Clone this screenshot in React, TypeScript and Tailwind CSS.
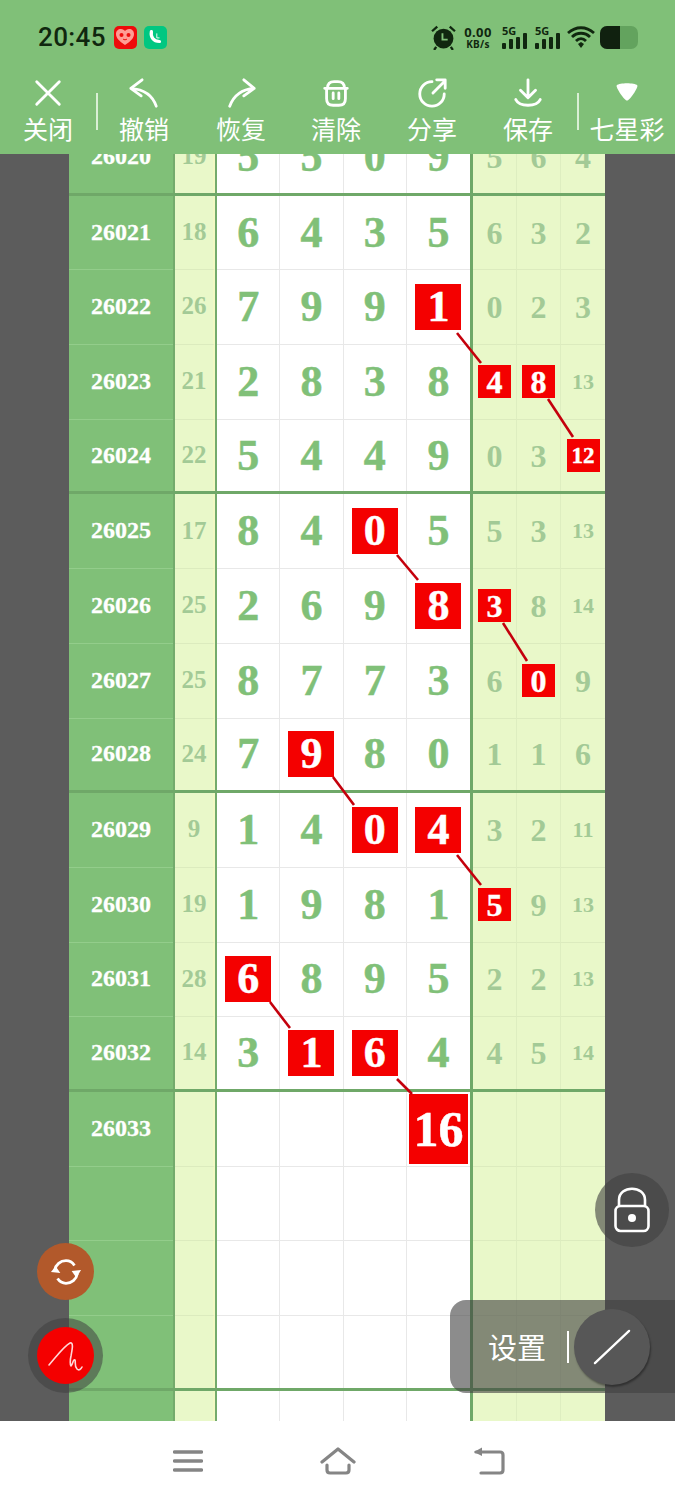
import React from "react";

const GREEN = "bg-[#80c078]";

type Row = {
  id: string;
  sum: string;
  main: string[];
  tail: string[];
  hitMain?: number[];
  hitTail?: number[];
  groupEnd?: boolean;
};

const rows: Row[] = [
  { id: "26020", sum: "19", main: ["5", "5", "0", "9"], tail: ["5", "6", "4"], groupEnd: true },
  { id: "26021", sum: "18", main: ["6", "4", "3", "5"], tail: ["6", "3", "2"] },
  { id: "26022", sum: "26", main: ["7", "9", "9", "1"], tail: ["0", "2", "3"], hitMain: [3] },
  { id: "26023", sum: "21", main: ["2", "8", "3", "8"], tail: ["4", "8", "13"], hitTail: [0, 1] },
  { id: "26024", sum: "22", main: ["5", "4", "4", "9"], tail: ["0", "3", "12"], hitTail: [2], groupEnd: true },
  { id: "26025", sum: "17", main: ["8", "4", "0", "5"], tail: ["5", "3", "13"], hitMain: [2] },
  { id: "26026", sum: "25", main: ["2", "6", "9", "8"], tail: ["3", "8", "14"], hitMain: [3], hitTail: [0] },
  { id: "26027", sum: "25", main: ["8", "7", "7", "3"], tail: ["6", "0", "9"], hitTail: [1] },
  { id: "26028", sum: "24", main: ["7", "9", "8", "0"], tail: ["1", "1", "6"], hitMain: [1], groupEnd: true },
  { id: "26029", sum: "9", main: ["1", "4", "0", "4"], tail: ["3", "2", "11"], hitMain: [2, 3] },
  { id: "26030", sum: "19", main: ["1", "9", "8", "1"], tail: ["5", "9", "13"], hitTail: [0] },
  { id: "26031", sum: "28", main: ["6", "8", "9", "5"], tail: ["2", "2", "13"], hitMain: [0] },
  { id: "26032", sum: "14", main: ["3", "1", "6", "4"], tail: ["4", "5", "14"], hitMain: [1, 2], groupEnd: true },
  { id: "26033", sum: "", main: ["", "", "", "16"], tail: ["", "", ""], hitMain: [3] },
  { id: "", sum: "", main: ["", "", "", ""], tail: ["", "", ""] },
  { id: "", sum: "", main: ["", "", "", ""], tail: ["", "", ""] },
  { id: "", sum: "", main: ["", "", "", ""], tail: ["", "", ""], groupEnd: true },
  { id: "", sum: "", main: ["", "", "", ""], tail: ["", "", ""] },
];

const links = [
  [457, 333, 481, 363],
  [548, 399, 573, 437],
  [397, 555, 418, 580],
  [503, 623, 527, 661],
  [333, 777, 354, 805],
  [457, 855, 481, 885],
  [270, 1002, 290, 1028],
  [397, 1079, 412, 1094],
];

const stroke = {
  fill: "none",
  stroke: "currentColor",
  strokeWidth: 3,
  strokeLinecap: "round" as const,
  strokeLinejoin: "round" as const,
};

const tools = [
  {
    label: "关闭",
    width: "w-[96px]",
    icon: <path d="M5 5 L29 29 M29 5 L5 29" {...stroke} />,
  },
  {
    label: "撤销",
    width: "w-[92px]",
    icon: <path d="M15 3 L3 12 L14 20 M3 12 C16 13 26 19 30 31" {...stroke} />,
  },
  {
    label: "恢复",
    width: "w-[102px]",
    icon: <path d="M20 3 L31 12 L20 20 M31 12 C18 13 9 20 5 31" {...stroke} />,
  },
  {
    label: "清除",
    width: "w-[88px]",
    icon: (
      <path
        d="M5 12 H29 M8 12 C8 7 11 5 15 5 H19 C23 5 26 7 26 12 M7 12 V23 C7 28 10 30 14 30 H20 C24 30 27 28 27 23 V12 M14 17 V23 M20 17 V23"
        {...stroke}
      />
    ),
  },
  {
    label: "分享",
    width: "w-[104px]",
    icon: <path d="M17 5 A13 13 0 1 0 30 18 M18 17 L31 4 M22 3 H31 V12" {...stroke} />,
  },
  {
    label: "保存",
    width: "w-[88px]",
    icon: <path d="M17 3 V21 M9 14 L17 22 L25 14 M4 24 C8 32 26 32 30 24" {...stroke} />,
  },
];

function Digit({ value, hit, tail }: { value: string; hit: boolean; tail?: boolean }) {
  if (!value) return null;
  if (hit && !tail) {
    if (value.length > 1) {
      return (
        <span className="flex h-[70px] w-[59px] items-center justify-center bg-[#f40000] text-[50px] font-bold leading-none text-white [-webkit-text-stroke:0.5px_#fff]">
          {value}
        </span>
      );
    }
    return (
      <span className="flex h-[46px] w-[46px] items-center justify-center bg-[#f40000] text-[44px] font-bold leading-none text-white [-webkit-text-stroke:0.5px_#fff]">
        {value}
      </span>
    );
  }
  if (hit) {
    return (
      <span
        className={`flex h-[33px] w-[33px] items-center justify-center bg-[#f40000] font-bold leading-none text-white [-webkit-text-stroke:0.4px_#fff] ${
          value.length > 1 ? "text-[23px]" : "text-[32px]"
        }`}
      >
        {value}
      </span>
    );
  }
  if (tail) {
    return (
      <span className={`font-bold leading-none text-[#a3ca96] ${value.length > 1 ? "text-[22px]" : "text-[32px]"}`}>
        {value}
      </span>
    );
  }
  return <span className="text-[44px] font-bold leading-none text-[#80c078] [-webkit-text-stroke:0.5px_#80c078]">{value}</span>;
}

function TableRow({ row }: { row: Row }) {
  const line = row.groupEnd ? "border-b-[3px] border-[#6fa868]" : "";
  return (
    <div className={`grid h-[74.7px] grid-cols-[104px_2px_40px_2px_253px_135px] ${line}`}>
      <div
        className={`flex items-center justify-center pb-[2px] text-[24px] font-bold text-white [-webkit-text-stroke:0.3px_#fff] ${GREEN} ${
          row.groupEnd ? "" : "border-b border-[#93cd8b]"
        }`}
      >
        {row.id}
      </div>
      <div className="bg-[#74ab6c]" />
      <div
        className={`flex items-center justify-center border-r-2 border-r-[#f2f9c4] bg-[#e9f8c9] pb-[2px] text-[25px] font-bold text-[#a3ca96] ${
          row.groupEnd ? "" : "border-b border-b-[#dcebbe]"
        }`}
      >
        {row.sum}
      </div>
      <div className="bg-[#74ab6c]" />
      <div className="grid grid-cols-4 bg-white">
        {row.main.map((v, i) => (
          <div
            key={i}
            className={`flex items-center justify-center border-r border-[#e8e8e8] last:border-r-0 ${
              row.groupEnd ? "" : "border-b"
            }`}
          >
            <Digit value={v} hit={!!row.hitMain?.includes(i)} />
          </div>
        ))}
      </div>
      <div className="grid grid-cols-3 border-l-[3px] border-l-[#6fa868] bg-[#e9f8c9]">
        {row.tail.map((v, i) => (
          <div
            key={i}
            className={`flex items-center justify-center border-r border-r-[#deeec0] last:border-r-0 ${
              row.groupEnd ? "" : "border-b border-b-[#dcebbe]"
            }`}
          >
            <Digit value={v} hit={!!row.hitTail?.includes(i)} tail />
          </div>
        ))}
      </div>
    </div>
  );
}

function StatusBar() {
  return (
    <div className="flex h-[72px] items-center pl-[38px] pr-[37px] pt-[2px] text-[#10270f]">
      <span className="text-[26px] font-medium tracking-[0.4px] [font-family:Roboto,sans-serif]">20:45</span>
      <span className="ml-[8px] flex h-[23px] w-[23px] items-center justify-center rounded-[5px] bg-[#ee0b0b]">
        <svg viewBox="0 0 20 20" className="h-[20px] w-[20px]">
          <path d="M10 18 C4 14 1 11 1 7 C1 4 3 2 6 2 C8 2 9 3 10 4 C11 3 12 2 14 2 C17 2 19 4 19 7 C19 11 16 14 10 18Z" fill="#ff9c94" />
          <circle cx="6.5" cy="8" r="2" fill="#ee0b0b" />
          <circle cx="13.5" cy="8" r="2" fill="#ee0b0b" />
          <path d="M8 12 C9 13 11 13 12 12" stroke="#ee0b0b" strokeWidth="1" fill="none" />
        </svg>
      </span>
      <span className="ml-[7px] flex h-[23px] w-[23px] items-center justify-center rounded-[5px] bg-[#00c781]">
        <svg viewBox="0 0 20 20" className="h-[18px] w-[18px]">
          <path d="M6 4 C5 10 8 15 15 15" fill="none" stroke="#fff" strokeWidth="3.6" strokeLinecap="round" />
          <path d="M12 6 V11 H15" fill="none" stroke="#fff" strokeWidth="1" />
        </svg>
      </span>
      <div className="flex-1" />
      <svg viewBox="0 0 24 24" className="h-[25px] w-[25px]">
        <circle cx="12" cy="13" r="9.5" fill="#10270f" />
        <path d="M1 6 L6 1.5 M23 6 L18 1.5 M5 21 L3 24 M19 21 L21 24" stroke="#10270f" strokeWidth="2.2" />
        <path d="M11 8 V14 H16" stroke="#80c078" strokeWidth="1.8" fill="none" />
      </svg>
      <div className="ml-[7px] flex w-[30px] flex-col items-center font-bold leading-none [font-family:'Noto_Sans',sans-serif]">
        <span className="text-[13px] leading-[14px] tracking-[0.4px]">0.00</span>
        <span className="text-[10px] leading-[11px] tracking-[0.3px]">KB/s</span>
      </div>
      {[0, 1].map((n) => (
        <div key={n} className={`relative flex h-[24px] w-[26px] items-end gap-[3px] ${n ? "ml-[7px]" : "ml-[9px]"}`}>
          <span className="absolute left-0 top-0 text-[11px] font-bold leading-none [font-family:'Noto_Sans',sans-serif]">5G</span>
          <span className="h-[6px] w-[4px] rounded-[1px] bg-[#10270f]" />
          <span className="h-[10px] w-[4px] rounded-[1px] bg-[#10270f]" />
          <span className="h-[12px] w-[4px] rounded-[1px] bg-[#10270f]" />
          <span className="h-[16px] w-[4px] rounded-[1px] bg-[#10270f]" />
        </div>
      ))}
      <svg viewBox="0 0 28 24" className="ml-[6px] h-[24px] w-[28px]">
        <path d="M1 8 C9 1 19 1 27 8 M5 12 C10 7 18 7 23 12 M9 16 C12 13 16 13 19 16" fill="none" stroke="#10270f" strokeWidth="2.8" />
        <path d="M11 19 L14 17 L17 19 L14 23Z" fill="#10270f" />
      </svg>
      <div className="ml-[5px] flex h-[23px] w-[38px] overflow-hidden rounded-[7px] bg-[#63a35e]">
        <div className="h-full w-[20px] bg-[#10210f]" />
      </div>
    </div>
  );
}

function Toolbar() {
  return (
    <div className="flex h-[82px] text-white [font-family:'Noto_Sans_CJK_SC',sans-serif]">
      {tools.map((t, i) => (
        <React.Fragment key={t.label}>
          <div className={`flex flex-col items-center ${t.width}`}>
            <svg viewBox="0 0 34 34" className="mt-[5px] h-[32px] w-[32px]">
              {t.icon}
            </svg>
            <span className="mt-[4px] text-[25px] leading-[30px]">{t.label}</span>
          </div>
          {i === 0 && <div className="mt-[21px] h-[37px] w-[2px] bg-[#d9efd5]" />}
        </React.Fragment>
      ))}
      <div className="ml-[5px] mt-[21px] h-[37px] w-[2px] bg-[#d9efd5]" />
      <div className="flex w-[96px] flex-col items-center">
        <svg viewBox="0 0 34 34" className="mt-[5px] h-[32px] w-[32px]">
          <path d="M6 9 C9 6 25 6 28 9 C29 11 20 25 17 25 C14 25 5 11 6 9Z" fill="#fff" />
        </svg>
        <span className="mt-[4px] text-[25px] leading-[30px]">七星彩</span>
      </div>
    </div>
  );
}

export default function App() {
  return (
    <div className="relative flex h-[1500px] w-[675px] flex-col overflow-hidden bg-white [font-family:'Liberation_Serif',serif]">
      <div className={`${GREEN} h-[154px] shrink-0`}>
        <StatusBar />
        <Toolbar />
      </div>

      <div className="h-[1267px] shrink-0 overflow-hidden bg-[#5c5c5c] pl-[69px] pr-[70px]">
        <div className="-mt-[33px]">
          {rows.map((row, i) => (
            <TableRow key={i} row={row} />
          ))}
        </div>
      </div>

      <div className="flex flex-1 items-center bg-white text-[#858585]">
        <svg viewBox="0 0 30 24" className="ml-[173px] h-[24px] w-[30px]">
          <path d="M1.5 3 H28.5 M1.5 12 H28.5 M1.5 21 H28.5" stroke="currentColor" strokeWidth="3.4" strokeLinecap="round" />
        </svg>
        <svg viewBox="0 0 36 28" className="ml-[117px] h-[28px] w-[36px]">
          <path d="M2 15 L18 2 L34 15 M7 18 V23 C7 25 8 26 10 26 H26 C28 26 29 25 29 23 V18" fill="none" stroke="currentColor" strokeWidth="3.2" strokeLinecap="round" strokeLinejoin="round" />
        </svg>
        <svg viewBox="0 0 32 28" className="ml-[117px] h-[28px] w-[32px]">
          <path d="M3 5 H27 C29 5 30 6 30 8 V23 C30 25 29 26 27 26 H8" fill="none" stroke="currentColor" strokeWidth="3.2" strokeLinecap="round" strokeLinejoin="round" />
          <path d="M1 5 L9 0.5 V9Z" fill="currentColor" />
        </svg>
      </div>

      {/* connector lines between the marked numbers */}
      <svg className="pointer-events-none absolute left-0 top-0 h-[1500px] w-[675px]" viewBox="0 0 675 1500">
        {links.map(([x1, y1, x2, y2], i) => (
          <line key={i} x1={x1} y1={y1} x2={x2} y2={y2} stroke="#c4000c" strokeWidth="2.6" />
        ))}
      </svg>

      {/* floating controls */}
      <div className="absolute left-[37px] top-[1243px] flex h-[57px] w-[57px] items-center justify-center rounded-full bg-[#b2592b] text-white">
        <svg viewBox="0 0 34 34" className="h-[32px] w-[32px]">
          <path d="M5 15 C6 9 11 5 17 5 C21 5 24 7 26 10 M29 19 C28 25 23 29 17 29 C13 29 10 27 8 24" fill="none" stroke="currentColor" strokeWidth="3" />
          <path d="M1 17 L6 11 L11 18Z M23 16 L28 23 L33 15Z" fill="currentColor" />
        </svg>
      </div>
      <div className="absolute left-[28px] top-[1318px] flex h-[75px] w-[75px] items-center justify-center rounded-full bg-[#404040]/55">
        <div className="flex h-[57px] w-[57px] items-center justify-center rounded-full bg-[#f40000]">
          <svg viewBox="0 0 40 40" className="h-[40px] w-[40px]">
            <path d="M3 29 C10 21 18 10 24 7 C28 6 26 14 25 20 C24 24 24 29 25 30 C27 28 27 23 29 24 C30 26 28 30 31 33 C33 35 35 33 36 31" fill="none" stroke="#ffd6d6" strokeWidth="1.6" strokeLinecap="round" strokeLinejoin="round" />
          </svg>
        </div>
      </div>
      <div className="absolute left-[595px] top-[1173px] flex h-[74px] w-[74px] items-center justify-center rounded-full bg-[#3f3f3f]/60 text-white">
        <svg viewBox="0 0 38 48" className="h-[48px] w-[38px]">
          <path d="M6 20 V14 C6 -1 32 -1 32 14 V20" fill="none" stroke="currentColor" strokeWidth="2.6" />
          <rect x="2.5" y="20" width="33" height="25" rx="5" fill="none" stroke="currentColor" strokeWidth="2.6" />
          <circle cx="19" cy="32" r="4" fill="currentColor" />
        </svg>
      </div>
      <div className="absolute left-[450px] top-[1300px] flex h-[93px] w-[225px] items-center rounded-l-[16px] bg-[#404040]/60 text-white">
        <span className="ml-[38px] text-[29px] leading-none [font-family:'Noto_Sans_CJK_SC',sans-serif]">设置</span>
        <div className="ml-[21px] h-[32px] w-[2px] bg-white" />
        <div className="ml-[5px] flex h-[76px] w-[76px] items-center justify-center rounded-full bg-[#575757] shadow-[1px_2px_2px_rgba(0,0,0,0.35)]">
          <svg viewBox="0 0 40 40" className="h-[38px] w-[38px]">
            <path d="M2 37 L38 3" stroke="#fff" strokeWidth="2.4" strokeLinecap="round" />
          </svg>
        </div>
      </div>
    </div>
  );
}
